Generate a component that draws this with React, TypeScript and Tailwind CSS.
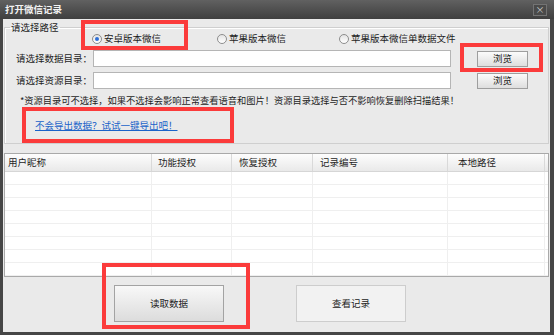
import React from "react";

const font = { fontFamily: '"Noto Sans CJK SC", "Noto Sans", sans-serif' };

function Radio({ checked, label, width }: { checked?: boolean; label: string; width?: string }) {
  return (
    <div className={`flex items-center gap-[2px] ${width ?? ""}`}>
      <span className="flex h-[10px] w-[10px] items-center justify-center rounded-full border border-[#8d8d8d] bg-gradient-to-b from-[#e4e4e4] to-[#ffffff]">
        {checked && <span className="h-[4px] w-[4px] rounded-full bg-[#2f6fd6]" />}
      </span>
      <span>{label}</span>
    </div>
  );
}

function PathRow({ label }: { label: string }) {
  return (
    <div className="flex h-[17px] items-center pl-[11px]">
      <span className="w-[77px]">{label}</span>
      <div className="h-[17px] w-[358px] border border-[#b5b5b5] bg-white" />
      <button className="ml-[26px] h-[16px] w-[51px] border border-[#9e9e9e] bg-gradient-to-b from-[#fbfbfb] to-[#dedede] text-[9.5px] leading-none text-[#222]">
        浏览
      </button>
    </div>
  );
}

const cols = [
  { title: "用户昵称", w: "w-[147px]", pl: "pl-[3px]" },
  { title: "功能授权", w: "w-[80px]", pl: "pl-[6px]" },
  { title: "恢复授权", w: "w-[81px]", pl: "pl-[7px]" },
  { title: "记录编号", w: "w-[135px]", pl: "pl-[7px]" },
  { title: "本地路径", w: "w-[97px]", pl: "pl-[10px]" },
];

export default function App() {
  const rows = Array.from({ length: 8 });
  return (
    <div className="relative h-[335px] w-[554px] overflow-hidden bg-[#464646] text-[9.5px] leading-[11px] text-[#1e1e1e]" style={font}>
      {/* title bar */}
      <div className="flex h-[19px] items-center justify-between bg-gradient-to-b from-[#616161] to-[#3f3f3f] pl-[5px] pr-[7px]">
        <span className="text-[9.5px] font-semibold text-[#f2f2f2]">打开微信记录</span>
        <span className="flex h-[12px] w-[14px] items-center justify-center border border-[#737373] bg-[#4a4a4a] text-[9px] leading-none text-[#cfcfcf]">
          ×
        </span>
      </div>

      <div className="ml-[3px] mr-[4px] flex h-[313px] flex-col bg-[#eaeaea]">
        <fieldset className="mx-[1px] mt-[3px] border border-[#cfcfcf] pb-[12px] shadow-[inset_1px_1px_0_#fff]">
          <legend className="ml-[5px] px-[1px] leading-[11px]">请选择路径</legend>
          <div className="flex h-[11px] items-center pl-[87px]">
            <Radio checked label="安卓版本微信" width="w-[125px]" />
            <Radio label="苹果版本微信" width="w-[122px]" />
            <Radio label="苹果版本微信单数据文件" />
          </div>
          <div className="mt-[6px] flex flex-col gap-[5px]">
            <PathRow label="请选择数据目录：" />
            <PathRow label="请选择资源目录：" />
          </div>
          <p className="mt-[6px] pl-[15px] text-[9.25px]">
            *资源目录可不选择，如果不选择会影响正常查看语音和图片！资源目录选择与否不影响恢复删除扫描结果！
          </p>
          <p className="mt-[14px] pl-[30px]">
            <span className="text-[#1a63c9] underline">不会导出数据？试试一键导出吧！</span>
          </p>
        </fieldset>

        {/* table */}
        <div className="mx-[1px] mt-[9px] h-[124px] border border-[#a9a9a9] bg-white">
          <div className="flex h-[18px] border-b border-[#d6d6d6] bg-gradient-to-b from-[#fdfdfd] to-[#e9e9e9]">
            {cols.map((c) => (
              <div key={c.title} className={`flex items-center border-r border-[#d9d9d9] ${c.w} ${c.pl}`}>
                {c.title}
              </div>
            ))}
            <div className="flex-1" />
          </div>
          {rows.map((_, i) => (
            <div key={i} className="flex h-[13px] border-b border-[#efefef]">
              {cols.map((c) => (
                <div key={c.title} className={`border-r border-[#efefef] ${c.w}`} />
              ))}
            </div>
          ))}
        </div>

        <div className="mt-[8px] flex pl-[111px]">
          <button className="h-[37px] w-[110px] border border-[#a3a3a3] bg-gradient-to-b from-[#f8f8f8] to-[#dcdcdc] text-[9.5px] text-[#222]">
            读取数据
          </button>
          <button className="ml-[72px] h-[37px] w-[110px] border border-[#cdcdcd] bg-[#f2f2f2] text-[9.5px] text-[#222]">
            查看记录
          </button>
        </div>
      </div>

      {/* red annotation boxes */}
      <div className="absolute left-[81px] top-[20px] h-[30px] w-[107px] border-[4px] border-[#fb3b3b]" />
      <div className="absolute left-[460px] top-[43px] h-[29px] w-[83px] border-[4px] border-[#fb3b3b]" />
      <div className="absolute left-[22px] top-[107px] h-[36px] w-[212px] border-[4px] border-[#fb3b3b]" />
      <div className="absolute left-[102px] top-[263px] h-[66px] w-[148px] border-[4px] border-[#fb3b3b]" />
    </div>
  );
}
